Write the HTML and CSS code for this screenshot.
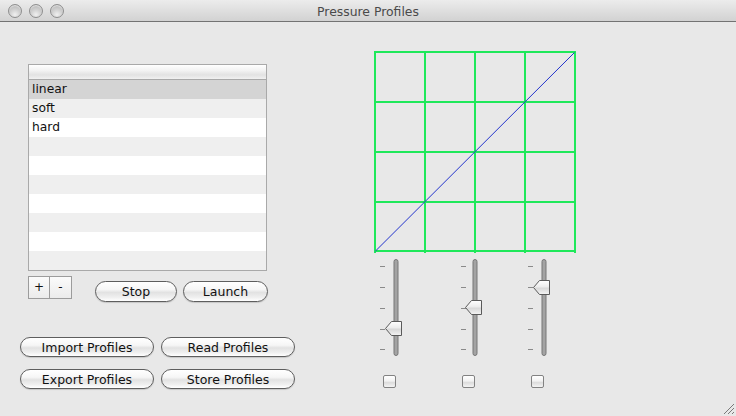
FILE: index.html
```html
<!DOCTYPE html>
<html>
<head>
<meta charset="utf-8">
<title>Pressure Profiles</title>
<link rel="stylesheet" href="styles.css">
</head>
<body>
<div class="window">
  <div class="titlebar">
    <div class="lights">
      <span class="light"></span><span class="light"></span><span class="light"></span>
    </div>
    <div class="title">Pressure Profiles</div>
  </div>
  <div class="content">
    <div class="left">
      <div class="list">
        <div class="list-header"></div>
        <div class="rows">
          <div class="row selected">linear</div>
          <div class="row">soft</div>
          <div class="row">hard</div>
          <div class="row"></div>
          <div class="row"></div>
          <div class="row"></div>
          <div class="row"></div>
          <div class="row"></div>
          <div class="row"></div>
          <div class="row"></div>
        </div>
      </div>
      <div class="list-controls">
        <div class="pm">
          <button class="pm-btn">+</button><button class="pm-btn">-</button>
        </div>
        <button class="pill stop">Stop</button>
        <button class="pill launch">Launch</button>
      </div>
      <div class="profile-buttons">
        <button class="pill wide">Import Profiles</button>
        <button class="pill wide">Read Profiles</button>
        <button class="pill wide">Export Profiles</button>
        <button class="pill wide">Store Profiles</button>
      </div>
    </div>
    <div class="right">
      <svg class="curve" width="202" height="202" viewBox="0 0 202 202">
        <g stroke="#1fe85a" stroke-width="2" fill="none">
          <line x1="1" y1="0" x2="1" y2="202"/>
          <line x1="51" y1="0" x2="51" y2="202"/>
          <line x1="101" y1="0" x2="101" y2="202"/>
          <line x1="151" y1="0" x2="151" y2="202"/>
          <line x1="201" y1="0" x2="201" y2="202"/>
          <line x1="0" y1="1" x2="202" y2="1"/>
          <line x1="0" y1="51" x2="202" y2="51"/>
          <line x1="0" y1="101" x2="202" y2="101"/>
          <line x1="0" y1="151" x2="202" y2="151"/>
          <line x1="0" y1="200" x2="202" y2="200"/>
        </g>
        <line x1="1.5" y1="200" x2="200.5" y2="1.5" stroke="#2233cc" stroke-width="1"/>
      </svg>
      <div class="sliders">
        <div class="slider-col">
          <svg class="slider" width="30" height="102" viewBox="0 0 30 102">
            <defs>
              <linearGradient id="thumbg" x1="0" y1="0" x2="0" y2="1">
                <stop offset="0" stop-color="#ffffff"/>
                <stop offset="0.45" stop-color="#ececec"/>
                <stop offset="0.55" stop-color="#d8d8d8"/>
                <stop offset="1" stop-color="#f4f4f4"/>
              </linearGradient>
            </defs>
            <g stroke="#8a8a8a" stroke-width="1">
              <line x1="2" y1="9.5" x2="7" y2="9.5"/>
              <line x1="2" y1="30.5" x2="7" y2="30.5"/>
              <line x1="2" y1="51.5" x2="7" y2="51.5"/>
              <line x1="2" y1="72.5" x2="7" y2="72.5"/>
              <line x1="2" y1="92.5" x2="7" y2="92.5"/>
            </g>
            <rect x="16" y="2.5" width="4" height="96" rx="2" fill="#a3a3a3" stroke="#777" stroke-width="1"/>
            <polygon points="7.5,71.5 13.5,64.5 23.5,64.5 23.5,78.5 13.5,78.5" fill="url(#thumbg)" stroke="#5a5a5a" stroke-width="1" stroke-linejoin="round"/>
          </svg>
          <span class="check"></span>
        </div>
        <div class="slider-col">
          <svg class="slider" width="30" height="102" viewBox="0 0 30 102">
            <g stroke="#8a8a8a" stroke-width="1">
              <line x1="2" y1="9.5" x2="7" y2="9.5"/>
              <line x1="2" y1="30.5" x2="7" y2="30.5"/>
              <line x1="2" y1="51.5" x2="7" y2="51.5"/>
              <line x1="2" y1="72.5" x2="7" y2="72.5"/>
              <line x1="2" y1="92.5" x2="7" y2="92.5"/>
            </g>
            <rect x="14" y="2.5" width="4" height="96" rx="2" fill="#a3a3a3" stroke="#777" stroke-width="1"/>
            <polygon points="6.5,50.5 12.5,43.5 22.5,43.5 22.5,57.5 12.5,57.5" fill="url(#thumbg)" stroke="#5a5a5a" stroke-width="1" stroke-linejoin="round"/>
          </svg>
          <span class="check"></span>
        </div>
        <div class="slider-col">
          <svg class="slider" width="30" height="102" viewBox="0 0 30 102">
            <g stroke="#8a8a8a" stroke-width="1">
              <line x1="2" y1="9.5" x2="7" y2="9.5"/>
              <line x1="2" y1="30.5" x2="7" y2="30.5"/>
              <line x1="2" y1="51.5" x2="7" y2="51.5"/>
              <line x1="2" y1="72.5" x2="7" y2="72.5"/>
              <line x1="2" y1="92.5" x2="7" y2="92.5"/>
            </g>
            <rect x="16" y="2.5" width="4" height="96" rx="2" fill="#a3a3a3" stroke="#777" stroke-width="1"/>
            <polygon points="7.5,30.5 13.5,23.5 23.5,23.5 23.5,37.5 13.5,37.5" fill="url(#thumbg)" stroke="#5a5a5a" stroke-width="1" stroke-linejoin="round"/>
          </svg>
          <span class="check"></span>
        </div>
      </div>
    </div>
  </div>
  <svg class="grip" width="14" height="14" viewBox="0 0 14 14">
    <g stroke="#7a7a7a" stroke-width="1">
      <line x1="13" y1="3" x2="3" y2="13"/>
      <line x1="13" y1="7" x2="7" y2="13"/>
      <line x1="13" y1="11" x2="11" y2="13"/>
    </g>
  </svg>
</div>
</body>
</html>
```

FILE: styles.css
```css
* { box-sizing: border-box; }
html, body { margin: 0; padding: 0; }
body {
  font-family: "DejaVu Sans", "Lucida Grande", sans-serif;
  background: #e8e8e8;
}
.window {
  position: relative;
  width: 736px;
  height: 416px;
  background: #e8e8e8;
  overflow: hidden;
}
.titlebar {
  position: relative;
  height: 22px;
  background: linear-gradient(#ececec, #d2d2d2);
  border-bottom: 1px solid #737373;
  display: flex;
  align-items: center;
  justify-content: center;
}
.lights {
  position: absolute;
  left: 8px;
  top: 4px;
  display: flex;
  gap: 7px;
}
.light {
  width: 14px;
  height: 14px;
  border-radius: 50%;
  border: 1px solid #8e8e8e;
  background: radial-gradient(circle at 50% 80%, #f0f0f0 0%, #d0d0d0 45%, #aeaeae 100%);
  box-shadow: inset 0 1px 1px rgba(255,255,255,0.6);
}
.title {
  font-size: 12.4px;
  color: #4a4a4a;
  margin-top: 1px;
}
.content {
  display: flex;
}
.left {
  flex: 0 0 374px;
  padding-left: 28px;
  padding-top: 42px;
}
.list {
  width: 239px;
  height: 207px;
  border: 1px solid #a9a9a9;
  background: #ffffff;
  overflow: hidden;
}
.list-header {
  height: 15px;
  background: linear-gradient(#ffffff 0%, #f2f2f2 40%, #e2e2e2 70%, #f0f0f0 100%);
  border-bottom: 1px solid #a8a8a8;
}
.row {
  height: 19px;
  line-height: 19px;
  padding-left: 3px;
  font-size: 12.3px;
  color: #111;
  background: #ffffff;
}
.row:nth-child(even) { background: #efefef; }
.row.selected { background: #d4d4d4; }
.list-controls {
  display: flex;
  align-items: flex-start;
  margin-top: 5px;
  height: 26px;
}
.pm {
  display: flex;
}
.pm-btn {
  width: 22px;
  height: 23px;
  margin: 0;
  padding: 0 0 2px 0;
  border: 1px solid #9c9c9c;
  background: linear-gradient(#fbfbfb, #ebebeb);
  font-family: "DejaVu Sans", sans-serif;
  font-size: 12px;
  color: #111;
}
.pm-btn + .pm-btn { border-left: none; width: 22px; }
.pill {
  height: 21px;
  padding: 0;
  margin: 0;
  border: 1px solid #5e5e5e;
  border-radius: 11px;
  background: linear-gradient(#ffffff 0%, #f6f6f6 40%, #e2e2e2 55%, #efefef 80%, #ffffff 100%);
  font-family: "DejaVu Sans", "Lucida Grande", sans-serif;
  font-size: 12.5px;
  color: #111;
  box-shadow: 0 1px 1px rgba(0,0,0,0.15);
}
.stop {
  width: 82px;
  margin-left: 23px;
  margin-top: 5px;
}
.launch {
  width: 85px;
  margin-left: 6px;
  margin-top: 5px;
}
.profile-buttons {
  display: grid;
  grid-template-columns: 134px 134px;
  column-gap: 7px;
  row-gap: 12px;
  margin-left: -8px;
  margin-top: 35px;
}
.wide { width: 134px; height: 20px; }
.right {
  padding-top: 29px;
}
.curve { display: block; }
.sliders {
  display: flex;
  margin-top: 4px;
}
.slider-col {
  width: 30px;
  display: flex;
  flex-direction: column;
}
.slider-col:nth-child(1) { margin-left: 4px; }
.slider-col:nth-child(2) { margin-left: 51px; }
.slider-col:nth-child(3) { margin-left: 37px; }
.slider { display: block; }
.check {
  display: block;
  width: 13px;
  height: 13px;
  margin-top: 16px;
  margin-left: 5px;
  border: 1px solid #828282;
  border-radius: 2px;
  background: linear-gradient(#ffffff, #f2f2f2 45%, #dcdcdc 60%, #f4f4f4);
}
.slider-col:nth-child(2) .check { margin-left: 3px; }
.grip {
  position: absolute;
  right: 1px;
  bottom: 1px;
}
```
